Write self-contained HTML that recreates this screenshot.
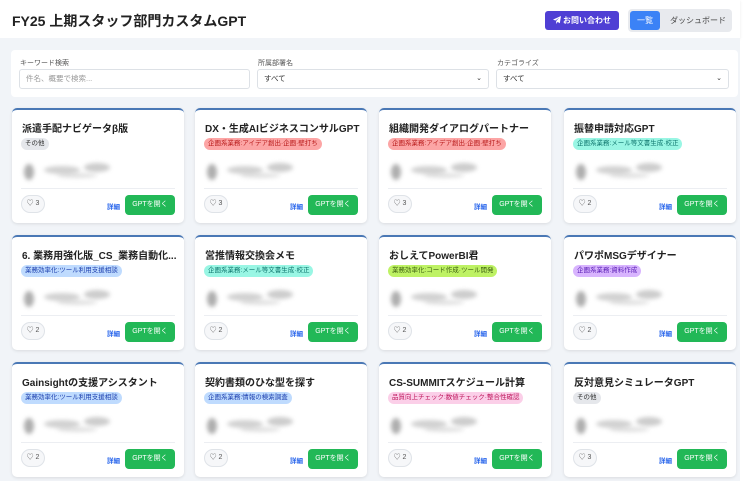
<!DOCTYPE html>
<html><head><meta charset="utf-8"><style>
*{box-sizing:border-box;margin:0;padding:0}
body{width:750px;height:481px;overflow:hidden;background:#fff;font-family:"Liberation Sans","Noto Sans CJK JP",sans-serif;position:relative}
.hdr{position:absolute;left:0;top:0;width:740px;height:38px;background:#fff;box-shadow:0 1px 3px rgba(0,0,0,.08)}
.main{position:absolute;left:0;top:38px;width:740px;height:443px;background:#f1f4f8}
h1{position:absolute;left:12px;top:11px;font-size:14px;font-weight:bold;color:#222}
.contact{position:absolute;left:545px;top:11px;width:74px;height:19px;background:#4f3fd4;border-radius:3px;color:#fff;font-size:8px;font-weight:bold;text-align:center;line-height:19px}
.contact svg{vertical-align:-1px;margin-right:2px}
.tabs{position:absolute;left:628px;top:9px;width:104px;height:23px;background:#e8eaee;border-radius:4px}
.t1{position:absolute;left:2px;top:2px;width:30px;height:19px;background:#3b82f6;border-radius:3px;color:#fff;font-size:8px;text-align:center;line-height:19px}
.t2{position:absolute;left:42px;top:0;line-height:23px;font-size:8px;color:#444}
.filter{position:absolute;left:11px;top:50px;width:727px;height:47px;background:#fff;border-radius:4px}
.lbl{position:absolute;top:58px;font-size:7px;color:#555}
.inp{position:absolute;top:69px;height:20px;border:1px solid #dde1e6;border-radius:3px;background:#fff;font-size:7.5px;line-height:18px;padding-left:6px;color:#333}
.inp .ar{position:absolute;right:6px;top:0;font-size:7px}
.card{position:absolute;width:172px;height:115px;background:#fff;border-radius:5px;border-top:2px solid #4a78b5;box-shadow:0 1px 3px rgba(0,0,0,.1)}
.ti{position:absolute;left:10px;top:10px;font-size:10px;font-weight:bold;color:#222;white-space:nowrap}
.tag{position:absolute;left:9px;top:28px;height:12px;border-radius:6px;font-size:6.5px;line-height:12px;padding:0 4px;white-space:nowrap}
.blur{position:absolute;left:10px;top:52px;width:110px;height:18px}
.blur i{position:absolute;border-radius:50%;background:#9a9a9a;filter:blur(2px)}
.hr{position:absolute;left:9px;right:9px;top:78px;border-top:1px solid #eceef2}
.hb{position:absolute;left:9px;top:85px;width:24px;height:18px;border:1px solid #dfe3e8;border-radius:9px;background:#f6f7f9;font-size:7px;color:#555;text-align:center;line-height:16px}
.det{position:absolute;left:95px;top:91px;font-size:6.5px;color:#2563eb;font-weight:bold}
.go{position:absolute;left:113px;top:85px;width:50px;height:20px;background:#22b857;border-radius:4px;color:#fff;font-size:7px;text-align:center;line-height:20px}
.g{background:#e5e7eb;color:#333}.r{background:#fca5a5;color:#b91c1c}.c{background:#99f6e4;color:#0f766e}.b{background:#bfdbfe;color:#1e40af}.l{background:#bef264;color:#3f6212}.p{background:#d8b4fe;color:#5b21b6}.k{background:#fbcfe8;color:#be185d}
</style></head><body>
<div class="hdr"><h1>FY25 上期スタッフ部門カスタムGPT</h1>
<div class="contact"><svg width="8" height="8" viewBox="0 0 10 10"><path d="M10 0L0 4.5l3 1.2L8 2 4 6.3V10l1.8-2.6L8.5 9z" fill="#fff"/></svg>お問い合わせ</div>
<div class="tabs"><div class="t1">一覧</div><div class="t2">ダッシュボード</div></div></div>
<div class="main"></div>
<div class="filter"></div>
<div class="lbl" style="left:20px">キーワード検索</div>
<div class="inp" style="left:19px;width:231px;color:#999">件名、概要で検索...</div>
<div class="lbl" style="left:258px">所属部署名</div>
<div class="inp" style="left:257px;width:232px">すべて<span class="ar">⌄</span></div>
<div class="lbl" style="left:497px">カテゴライズ</div>
<div class="inp" style="left:496px;width:233px">すべて<span class="ar">⌄</span></div>

<div class="card" style="left:12px;top:108px"><div class="ti">派遣手配ナビゲータβ版</div><div class="tag g">その他</div><div class="blur"><i style="left:2px;top:2px;width:10px;height:16px;opacity:.8"></i><i style="left:22px;top:4px;width:36px;height:8px;opacity:.45"></i><i style="left:62px;top:1px;width:26px;height:9px;opacity:.5"></i><i style="left:35px;top:11px;width:40px;height:5px;opacity:.3"></i></div><div class="hr"></div><div class="hb">♡ 3</div><div class="det">詳細</div><div class="go">GPTを開く</div></div>
<div class="card" style="left:195px;top:108px"><div class="ti">DX・生成AIビジネスコンサルGPT</div><div class="tag r">企画系業務:アイデア創出·企画·壁打ち</div><div class="blur"><i style="left:2px;top:2px;width:10px;height:16px;opacity:.8"></i><i style="left:22px;top:4px;width:36px;height:8px;opacity:.45"></i><i style="left:62px;top:1px;width:26px;height:9px;opacity:.5"></i><i style="left:35px;top:11px;width:40px;height:5px;opacity:.3"></i></div><div class="hr"></div><div class="hb">♡ 3</div><div class="det">詳細</div><div class="go">GPTを開く</div></div>
<div class="card" style="left:379px;top:108px"><div class="ti">組織開発ダイアログパートナー</div><div class="tag r">企画系業務:アイデア創出·企画·壁打ち</div><div class="blur"><i style="left:2px;top:2px;width:10px;height:16px;opacity:.8"></i><i style="left:22px;top:4px;width:36px;height:8px;opacity:.45"></i><i style="left:62px;top:1px;width:26px;height:9px;opacity:.5"></i><i style="left:35px;top:11px;width:40px;height:5px;opacity:.3"></i></div><div class="hr"></div><div class="hb">♡ 3</div><div class="det">詳細</div><div class="go">GPTを開く</div></div>
<div class="card" style="left:564px;top:108px"><div class="ti">振替申請対応GPT</div><div class="tag c">企画系業務:メール等文書生成·校正</div><div class="blur"><i style="left:2px;top:2px;width:10px;height:16px;opacity:.8"></i><i style="left:22px;top:4px;width:36px;height:8px;opacity:.45"></i><i style="left:62px;top:1px;width:26px;height:9px;opacity:.5"></i><i style="left:35px;top:11px;width:40px;height:5px;opacity:.3"></i></div><div class="hr"></div><div class="hb">♡ 2</div><div class="det">詳細</div><div class="go">GPTを開く</div></div>

<div class="card" style="left:12px;top:235px"><div class="ti">6. 業務用強化版_CS_業務自動化...</div><div class="tag b">業務効率化:ツール利用支援相談</div><div class="blur"><i style="left:2px;top:2px;width:10px;height:16px;opacity:.8"></i><i style="left:22px;top:4px;width:36px;height:8px;opacity:.45"></i><i style="left:62px;top:1px;width:26px;height:9px;opacity:.5"></i><i style="left:35px;top:11px;width:40px;height:5px;opacity:.3"></i></div><div class="hr"></div><div class="hb">♡ 2</div><div class="det">詳細</div><div class="go">GPTを開く</div></div>
<div class="card" style="left:195px;top:235px"><div class="ti">営推情報交換会メモ</div><div class="tag c">企画系業務:メール等文書生成·校正</div><div class="blur"><i style="left:2px;top:2px;width:10px;height:16px;opacity:.8"></i><i style="left:22px;top:4px;width:36px;height:8px;opacity:.45"></i><i style="left:62px;top:1px;width:26px;height:9px;opacity:.5"></i><i style="left:35px;top:11px;width:40px;height:5px;opacity:.3"></i></div><div class="hr"></div><div class="hb">♡ 2</div><div class="det">詳細</div><div class="go">GPTを開く</div></div>
<div class="card" style="left:379px;top:235px"><div class="ti">おしえてPowerBI君</div><div class="tag l">業務効率化:コード作成·ツール開発</div><div class="blur"><i style="left:2px;top:2px;width:10px;height:16px;opacity:.8"></i><i style="left:22px;top:4px;width:36px;height:8px;opacity:.45"></i><i style="left:62px;top:1px;width:26px;height:9px;opacity:.5"></i><i style="left:35px;top:11px;width:40px;height:5px;opacity:.3"></i></div><div class="hr"></div><div class="hb">♡ 2</div><div class="det">詳細</div><div class="go">GPTを開く</div></div>
<div class="card" style="left:564px;top:235px"><div class="ti">パワポMSGデザイナー</div><div class="tag p">企画系業務:資料作成</div><div class="blur"><i style="left:2px;top:2px;width:10px;height:16px;opacity:.8"></i><i style="left:22px;top:4px;width:36px;height:8px;opacity:.45"></i><i style="left:62px;top:1px;width:26px;height:9px;opacity:.5"></i><i style="left:35px;top:11px;width:40px;height:5px;opacity:.3"></i></div><div class="hr"></div><div class="hb">♡ 2</div><div class="det">詳細</div><div class="go">GPTを開く</div></div>

<div class="card" style="left:12px;top:362px"><div class="ti">Gainsightの支援アシスタント</div><div class="tag b">業務効率化:ツール利用支援相談</div><div class="blur"><i style="left:2px;top:2px;width:10px;height:16px;opacity:.8"></i><i style="left:22px;top:4px;width:36px;height:8px;opacity:.45"></i><i style="left:62px;top:1px;width:26px;height:9px;opacity:.5"></i><i style="left:35px;top:11px;width:40px;height:5px;opacity:.3"></i></div><div class="hr"></div><div class="hb">♡ 2</div><div class="det">詳細</div><div class="go">GPTを開く</div></div>
<div class="card" style="left:195px;top:362px"><div class="ti">契約書類のひな型を探す</div><div class="tag b">企画系業務:情報の検索調査</div><div class="blur"><i style="left:2px;top:2px;width:10px;height:16px;opacity:.8"></i><i style="left:22px;top:4px;width:36px;height:8px;opacity:.45"></i><i style="left:62px;top:1px;width:26px;height:9px;opacity:.5"></i><i style="left:35px;top:11px;width:40px;height:5px;opacity:.3"></i></div><div class="hr"></div><div class="hb">♡ 2</div><div class="det">詳細</div><div class="go">GPTを開く</div></div>
<div class="card" style="left:379px;top:362px"><div class="ti">CS-SUMMITスケジュール計算</div><div class="tag k">品質向上チェック:数値チェック·整合性確認</div><div class="blur"><i style="left:2px;top:2px;width:10px;height:16px;opacity:.8"></i><i style="left:22px;top:4px;width:36px;height:8px;opacity:.45"></i><i style="left:62px;top:1px;width:26px;height:9px;opacity:.5"></i><i style="left:35px;top:11px;width:40px;height:5px;opacity:.3"></i></div><div class="hr"></div><div class="hb">♡ 2</div><div class="det">詳細</div><div class="go">GPTを開く</div></div>
<div class="card" style="left:564px;top:362px"><div class="ti">反対意見シミュレータGPT</div><div class="tag g">その他</div><div class="blur"><i style="left:2px;top:2px;width:10px;height:16px;opacity:.8"></i><i style="left:22px;top:4px;width:36px;height:8px;opacity:.45"></i><i style="left:62px;top:1px;width:26px;height:9px;opacity:.5"></i><i style="left:35px;top:11px;width:40px;height:5px;opacity:.3"></i></div><div class="hr"></div><div class="hb">♡ 3</div><div class="det">詳細</div><div class="go">GPTを開く</div></div>
</body></html>
